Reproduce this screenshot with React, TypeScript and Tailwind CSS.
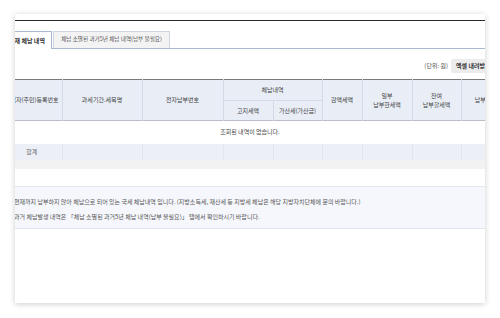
import React from 'react'

const cols = [60, 80, 81, 50, 49, 40, 50, 49, 49]

export default function App() {
  const font = { fontFamily: '"Noto Sans CJK KR", "Noto Sans", sans-serif' }
  return (
    <div className="w-[500px] h-[318px] bg-white pt-[14px] pl-[15px] overflow-hidden" style={font}>
      <div className="w-[470px] h-[289px] bg-white overflow-hidden shadow-[0_1px_6px_rgba(0,0,0,0.2)]">
        <div className="-ml-[13px] w-[483px] text-[6px] leading-none">
          {/* cropped heading + rule */}
          <div className="h-[7px] border-b border-[#2b2b2b]" />

          {/* Tabs */}
          <div className="mt-[10px] flex items-end h-[18px] border-b border-[#a9b9d1]">
            <div className="w-[50px] h-[18px] -mb-px bg-white border border-b-0 border-[#a9b9d1] flex items-center justify-center font-bold text-[#333]">
              현재 체납 내역
            </div>
            <div className="ml-px w-[117px] h-[17px] bg-[#f3f3f3] border border-b-0 border-[#cfd6e0] flex items-center justify-center text-[#555] text-[5.6px]">
              체납 소멸된 과거5년 체납 내역(납부 불필요)
            </div>
          </div>

          {/* Unit + excel */}
          <div className="mt-[10px] -mr-[12px] flex items-center justify-end gap-[3px] h-[14px]">
            <span className="text-[#555]">(단위: 원)</span>
            <div className="w-[46px] h-[14px] bg-[#ececec] rounded-[2px] flex items-center pl-[5px] font-bold text-[#333] whitespace-nowrap">
              엑셀 내려받기
            </div>
          </div>

          {/* Table */}
          <table className="mt-[6px] table-fixed border-collapse w-[508px] text-center">
            <colgroup>
              {cols.map((w, i) => (
                <col key={i} style={{ width: w }} />
              ))}
            </colgroup>
            <thead className="bg-[#e8edf6] text-[#444]">
              <tr className="h-[21px] border-t border-[#7a7a7a]">
                <th rowSpan={2} className="font-normal border-r border-[#d3dae6]">사업자(주민)등록번호</th>
                <th rowSpan={2} className="font-normal border-r border-[#d3dae6]">과세기간.세목명</th>
                <th rowSpan={2} className="font-normal border-r border-[#d3dae6]">전자납부번호</th>
                <th colSpan={2} className="font-normal border-r border-b border-[#d3dae6]">체납내역</th>
                <th rowSpan={2} className="font-normal border-r border-[#d3dae6]">감액세액</th>
                <th rowSpan={2} className="font-normal border-r border-[#d3dae6] leading-[9px]">
                  일부
                  <br />
                  납부한세액
                </th>
                <th rowSpan={2} className="font-normal border-r border-[#d3dae6] leading-[9px]">
                  잔여
                  <br />
                  납부할세액
                </th>
                <th rowSpan={2} className="font-normal">납부기한</th>
              </tr>
              <tr className="h-[20px] border-b border-[#b9bec7]">
                <th className="font-normal border-r border-[#d3dae6]">고지세액</th>
                <th className="font-normal border-r border-[#d3dae6]">가산세(가산금)</th>
              </tr>
            </thead>
            <tbody>
              <tr className="h-[23px] bg-white">
                <td colSpan={9} className="text-[#444]">
                  <div className="w-[496px] text-center">조회된 내역이 없습니다.</div>
                </td>
              </tr>
              <tr className="h-[16px] bg-[#eceff6] text-[#666]">
                <td className="border-r border-[#e0e5ee]">합계</td>
                <td className="border-r border-[#e0e5ee]" />
                <td className="border-r border-[#e0e5ee]" />
                <td className="border-r border-[#e0e5ee]" />
                <td className="border-r border-[#e0e5ee]" />
                <td className="border-r border-[#e0e5ee]" />
                <td className="border-r border-[#e0e5ee]" />
                <td className="border-r border-[#e0e5ee]" />
                <td />
              </tr>
            </tbody>
          </table>
          <div className="h-[9px] bg-[#f2f2f2]" />

          {/* Info box */}
          <div className="mt-[17px] h-[43px] bg-[#f5f7fc] border-y border-[#e1e7f0] pl-[12px] pt-[7px] text-[#555] leading-[15px] whitespace-nowrap">
            <p>현재까지 납부하지 않아 체납으로 되어 있는 국세 체납내역 입니다. (지방소득세, 재산세 등 지방세 체납은 해당 지방자치단체에 문의 바랍니다.)</p>
            <p>과거 체납발생 내역은 「체납 소멸된 과거5년 체납 내역(납부 불필요)」 탭에서 확인하시기 바랍니다.</p>
          </div>
        </div>
      </div>
    </div>
  )
}
